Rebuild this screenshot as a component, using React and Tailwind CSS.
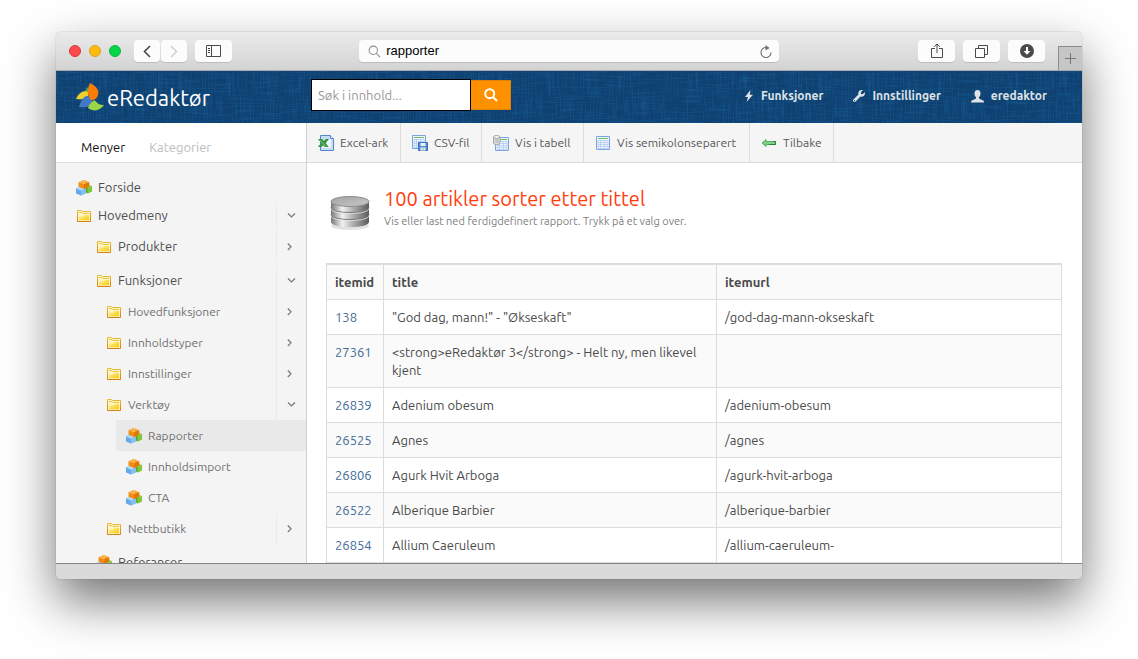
import { useState } from 'react'
import { FaWrench } from 'react-icons/fa'

const MENU = [
  { label: 'Forside', icon: 'cubes' },
  {
    label: 'Hovedmeny',
    open: true,
    children: [
      { label: 'Produkter', children: [] },
      {
        label: 'Funksjoner',
        open: true,
        children: [
          { label: 'Hovedfunksjoner', children: [] },
          { label: 'Innholdstyper', children: [] },
          { label: 'Innstillinger', children: [] },
          {
            label: 'Verktøy',
            open: true,
            children: [
              { label: 'Rapporter', icon: 'cubes', active: true },
              { label: 'Innholdsimport', icon: 'cubes' },
              { label: 'CTA', icon: 'cubes' },
            ],
          },
          { label: 'Nettbutikk', children: [] },
        ],
      },
      { label: 'Referanser', icon: 'cubes' },
    ],
  },
]

const ROWS = [
  { id: '138', title: '"God dag, mann!" - "Økseskaft"', url: '/god-dag-mann-okseskaft' },
  { id: '27361', title: '<strong>eRedaktør 3</strong> - Helt ny, men likevel kjent', url: '' },
  { id: '26839', title: 'Adenium obesum', url: '/adenium-obesum' },
  { id: '26525', title: 'Agnes', url: '/agnes' },
  { id: '26806', title: 'Agurk Hvit Arboga', url: '/agurk-hvit-arboga' },
  { id: '26522', title: 'Alberique Barbier', url: '/alberique-barbier' },
  { id: '26854', title: 'Allium Caeruleum', url: '/allium-caeruleum-' },
]

const LEVELS = [
  { pad: 'pl-5', row: 'h-7', text: 'text-[13px] text-[#4f4f4f]', list: 'pt-[11px]' },
  { pad: 'pl-10', row: 'h-[31px]', text: 'text-[13px] text-[#4f4f4f]', list: 'flex flex-col gap-[3px] pt-px' },
  { pad: 'pl-[50px]', row: 'h-[31px]', text: 'text-xs text-[#707070]', list: '' },
  { pad: 'pl-[10px] ml-[60px]', row: 'h-[31px]', text: 'text-xs text-[#707070]', list: '' },
]

/* Icons */

const Cubes = () => (
  <svg width="16" height="16" viewBox="0 0 16 16" className="shrink-0">
    <path d="M9 6.500l4-1.500 3 1.300v5L11.500 13.500 9 12z" fill="#58a826" />
    <path d="M9 6.500l4-1.500 3 1.300-4.500 2z" fill="#a4dd66" />
    <path d="M11.500 8.300L16 6.300v5l-4.500 2.200z" fill="#7cc93c" />
    <path d="M0 8.300L5 6.300l5 2.200v4.700L5 15.600 0 13.500z" fill="#64a9e8" />
    <path d="M0 8.300L5 6.300l5 2.200-5 2.200z" fill="#b4dafb" />
    <path d="M5 10.700l5-2.200v4.700L5 15.600z" fill="#86bff3" />
    <path d="M2.500 2.200L8 0l5.200 2.200v4.500L8 9 2.500 6.700z" fill="#f08d16" />
    <path d="M2.500 2.200L8 0l5.200 2.200L8 4.300z" fill="#ffbe5c" />
    <path d="M8 4.300l5.200-2.100v4.500L8 9z" fill="#e07808" />
    <path d="M5 2l1.500-.6 1.200.5-1.500.7zM8.500 2.300l1.500-.6 1.200.5-1.500.7z" fill="#e67f0c" />
  </svg>
)

const Folder = () => (
  <svg width="16" height="16" viewBox="0 0 16 16" className="shrink-0">
    <defs>
      <linearGradient id="folderFill" x1="0" y1="0" x2="1" y2="1">
        <stop offset="0" stopColor="#fff3a0" />
        <stop offset="1" stopColor="#f4c905" />
      </linearGradient>
      <linearGradient id="folderEdge" x1="0" y1="0" x2="0" y2="1">
        <stop offset="0" stopColor="#e6bd36" />
        <stop offset="1" stopColor="#d97f18" />
      </linearGradient>
    </defs>
    <path d="M1.500 13.500v-11h4l1 1h8v10z" fill="#fff5c2" stroke="url(#folderEdge)" />
    <path d="M3 12.300V8.500h4l1.500-1.500H13v5.300z" fill="url(#folderFill)" />
    <path d="M3 4.500h3M6.500 5.500H13" stroke="#eac34a" />
  </svg>
)

const Grid = ({ x = 0, y = 0 }) => (
  <g transform={`translate(${x} ${y})`}>
    <path d="M.5.5h13v13H.5z" fill="#eef5ff" stroke="#7fa3dc" />
    <path d="M2 2.500h10" stroke="#6cc35f" />
    <path d="M2 4.500h10v8H2zM2 6.500h10M2 8.500h10M2 10.500h10M4.500 4.500v8M8.500 4.500v8" fill="none" stroke="#b3cbf0" strokeWidth=".8" />
  </g>
)

const TOOL_ICONS = {
  excel: (
    <>
      <path d="M2.500.5h10l3 3v12h-13z" fill="#c7dcf8" stroke="#5585cf" />
      <path d="M12.500.5v3h3" fill="#fff" stroke="#5585cf" />
      <path d="M4 13h9V4h-2z" fill="#eff6ff" />
      <path d="M0 4h4l1.800 2L8 4h3L7.700 8l3 4H6.500L5 10.300 3.200 12H0l3-4z" fill="#34943b" />
      <path d="M1.500 4.800L8 11.500" stroke="#8bd17d" />
    </>
  ),
  csv: (
    <>
      <Grid />
      <path d="M6.500 7.500h9v8h-9z" fill="#5487d6" stroke="#3f6fc0" />
      <path d="M8.500 8h5v3h-5z" fill="#e9f2ff" />
      <path d="M8.500 12.500h5v3h-5z" fill="#fff" />
      <path d="M9.500 14h3" stroke="#63bf48" strokeWidth="1.200" />
    </>
  ),
  table: (
    <>
      <Grid x={2} y={2} />
      <path d="M.5 2v6c0 1 1 1.500 3 1.500S7 9 7 8V2" fill="#dedede" stroke="#a5a5a5" />
      <ellipse cx="3.700" cy="2" rx="3.200" ry="1.500" fill="#f4f4f4" stroke="#a5a5a5" />
      <path d="M3 4v4M4.800 4v4" stroke="#b2b2b2" />
    </>
  ),
  list: <Grid x={1} y={1} />,
  back: (
    <>
      <path d="M1 8l4-3.500v2h9.500v3H5v2z" fill="#7ed084" stroke="#3fa052" strokeWidth=".8" />
      <path d="M12 6.500h2.500v3H8" fill="none" stroke="#1f7d38" strokeWidth=".9" />
    </>
  ),
}

const TOOLS = [
  { label: 'Excel-ark', icon: 'excel', width: 'w-[94px]' },
  { label: 'CSV-fil', icon: 'csv', width: 'w-[81px]' },
  { label: 'Vis i tabell', icon: 'table', width: 'w-[102px]' },
  { label: 'Vis semikolonseparert', icon: 'list', width: 'w-[166px]' },
  { label: 'Tilbake', icon: 'back', width: 'w-[84px]' },
]

const Chevron = ({ open }) => (
  <svg width="10" height="10" viewBox="0 0 10 10" fill="none" stroke="#777" strokeWidth="1.200">
    {open ? <path d="M1 2.500L4.500 6 8 2.500" /> : <path d="M.8 1.500L4 4.800.8 8" />}
  </svg>
)

const Magnifier = ({ size, className, width }) => (
  <svg width={size} height={size} viewBox="0 0 14 14" fill="none" stroke="currentColor" strokeWidth={width} className={className}>
    <circle cx="5.700" cy="5.700" r="4.500" />
    <path d="M9 9l4 4" />
  </svg>
)

const Logo = () => (
  <svg width="29" height="28" viewBox="0 0 29 28" className="shrink-0">
    <path d="M8 10l3-6c2 2 3 5 2 8z" fill="#5b9f45" />
    <path d="M0 16C3 9 8 7 12.500 9c1 5-4 8.500-12.500 7z" fill="#ecd02f" />
    <path d="M3 24c2-7 5-11 8-11 3 0 5 3 7 7-3 4-9 5-15 4z" fill="#4478c4" />
    <path d="M14 0c6 3 9.500 7 8 12-1 4-4 5.500-7 5-4-5-4-11-1-17z" fill="#f97c05" />
    <path d="M12 25c1-4 4-6 6.500-8 2 3 5 5 9.500 5-4 6-11 7-16 3z" fill="#9ad746" />
  </svg>
)

const Database = () => (
  <svg width="42" height="38" viewBox="0 0 42 38" className="shrink-0">
    <defs>
      <linearGradient id="metal">
        <stop offset="0" stopColor="#777" />
        <stop offset=".3" stopColor="#f2f2f2" />
        <stop offset=".55" stopColor="#b5b5b5" />
        <stop offset="1" stopColor="#5a5a5a" />
      </linearGradient>
      <linearGradient id="lid" x1="0" y1="0" x2="1" y2="1">
        <stop offset="0" stopColor="#a2a2a2" />
        <stop offset="1" stopColor="#c9c9c9" />
      </linearGradient>
    </defs>
    <ellipse cx="21" cy="31" rx="19" ry="4" fill="#e2e2e2" />
    <path d="M2 7v20c0 3 8 5 19 5s19-2 19-5V7z" fill="url(#metal)" />
    <path d="M2 12.500c0 3 8 5 19 5s19-2 19-5M2 19.500c0 3 8 5 19 5s19-2 19-5" fill="none" stroke="#777" />
    <path d="M2 13.500c0 3 8 5 19 5s19-2 19-5M2 20.500c0 3 8 5 19 5s19-2 19-5" fill="none" stroke="#e6e6e6" strokeWidth=".8" />
    <ellipse cx="21" cy="6.500" rx="19" ry="5" fill="url(#lid)" stroke="#8d8d8d" />
  </svg>
)

const BoltIcon = () => (
  <svg width="10" height="12" viewBox="0 0 10 12" fill="currentColor">
    <path d="M6.500 0L1 7h3L2.500 12 9 4.800H5.800z" />
  </svg>
)

const UserIcon = () => (
  <svg width="13" height="13" viewBox="0 0 13 13" fill="currentColor">
    <path d="M6.500 0C8.500 0 9.600 1.200 9.500 3.500 9.400 5.300 8.900 6.500 8 7.300v1.300l4 1.900c.7.400 1 1 1 2H0c0-1 .3-1.600 1-2l4-1.900V7.300C4.100 6.500 3.600 5.300 3.500 3.500 3.400 1.200 4.500 0 6.500 0z" />
  </svg>
)

const Linen = () => (
  <svg className="absolute inset-0 size-full" aria-hidden="true">
    <filter id="weft" x="0" y="0" width="100%" height="100%" colorInterpolationFilters="sRGB">
      <feTurbulence type="fractalNoise" baseFrequency="0.04 0.8" numOctaves="2" seed="3" />
      <feColorMatrix values="0 0 0 0 .12  0 0 0 0 .42  0 0 0 0 .65  2.500 0 0 0 -1.100" />
    </filter>
    <filter id="warp" x="0" y="0" width="100%" height="100%" colorInterpolationFilters="sRGB">
      <feTurbulence type="fractalNoise" baseFrequency="0.8 0.04" numOctaves="2" seed="8" />
      <feColorMatrix values="0 0 0 0 .12  0 0 0 0 .42  0 0 0 0 .65  2.500 0 0 0 -1.100" />
    </filter>
    <rect width="100%" height="100%" filter="url(#weft)" opacity=".35" />
    <rect width="100%" height="100%" filter="url(#warp)" opacity=".4" />
  </svg>
)

/* Browser frame */

const ChromeButton = ({ label, className = 'w-[37px]', children }) => (
  <button
    aria-label={label}
    className={`h-[22px] flex items-center justify-center rounded bg-[#fcfcfc] text-[#4a4a4a] shadow-[0_1px_0_#bdbdbd] ${className}`}
  >
    {children}
  </button>
)

function BrowserBar() {
  const [address, setAddress] = useState('rapporter')

  return (
    <div className="h-[39px] shrink-0 relative flex items-center pl-[13px] pr-[37px] bg-linear-to-b from-[#ebebeb] to-[#d3d3d3] border-b border-[#a9a9a9]">
      <div className="flex-12 flex items-center">
        <div className="flex gap-2">
          <span className="size-3 rounded-full bg-[#fc4a4c] border border-[#df3438]" />
          <span className="size-3 rounded-full bg-[#fdbc0c] border border-[#dfa023]" />
          <span className="size-3 rounded-full bg-[#05d546] border border-[#12b33a]" />
        </div>
        <div className="flex gap-px ml-[13px]">
          <ChromeButton label="Tilbake" className="w-[26px]">
            <svg width="8" height="13" viewBox="0 0 8 13" fill="none" stroke="currentColor" strokeWidth="1.600">
              <path d="M7 1L1.500 6.500 7 12" />
            </svg>
          </ChromeButton>
          <ChromeButton label="Frem" className="w-[26px]">
            <svg width="8" height="13" viewBox="0 0 8 13" fill="none" stroke="#d0d0d0" strokeWidth="1.500">
              <path d="M1 1l5.500 5.500L1 12" />
            </svg>
          </ChromeButton>
        </div>
        <ChromeButton label="Sidefelt" className="w-[37px] ml-2">
          <svg width="15" height="12" viewBox="0 0 15 12" fill="none" stroke="currentColor">
            <path d="M.5.5h14v11H.5zM5.500.5v11M2 3.500h2M2 5.500h2M2 7.500h2" />
          </svg>
        </ChromeButton>
      </div>

      <label className="w-[43%] h-[22px] flex items-center gap-[5px] pl-[9px] pr-[7px] rounded bg-[#fcfcfc] shadow-[0_1px_0_#bdbdbd]">
        <Magnifier size={13} width={1.1} className="text-[#8c8c8c]" />
        <input
          aria-label="Adresse"
          value={address}
          onChange={e => setAddress(e.target.value)}
          className="flex-1 min-w-0 font-['Liberation_Sans',sans-serif] text-[13px] text-black outline-none"
        />
        <svg width="12" height="13" viewBox="0 0 12 13" fill="none" stroke="#6f6f6f" strokeWidth="1.100">
          <path d="M8.500 3.200A5 5 0 1 0 11 7.500" />
          <path d="M5.500 0L9.500 3 5.500 5.500z" fill="#6f6f6f" stroke="none" />
        </svg>
      </label>

      <div className="flex-11 flex justify-end gap-2">
        <ChromeButton label="Del">
          <svg width="12" height="16" viewBox="0 0 12 16" fill="none" stroke="currentColor">
            <path d="M4 5.500H.5v9h11v-9H8M6 10V1M3.200 3.700L6 1l2.800 2.700" />
          </svg>
        </ChromeButton>
        <ChromeButton label="Faner">
          <svg width="13" height="13" viewBox="0 0 13 13" fill="none" stroke="currentColor">
            <path d="M.5 3.500h9v9h-9zM3.500 3.500v-3h9v9h-3" />
          </svg>
        </ChromeButton>
        <ChromeButton label="Nedlastinger">
          <svg width="14" height="14" viewBox="0 0 14 14">
            <circle cx="7" cy="7" r="7" fill="currentColor" />
            <path d="M6 3h2v4h2.500L7 10.800 3.500 7H6z" fill="#fff" />
          </svg>
        </ChromeButton>
      </div>

      <button
        aria-label="Ny fane"
        className="absolute right-0 bottom-0 w-6 h-6 flex items-center justify-center bg-[#c6c6c6] border-l border-t border-[#8c8c8c]"
      >
        <svg width="11" height="11" viewBox="0 0 11 11" stroke="#777">
          <path d="M5.500 0v11M0 5.500h11" />
        </svg>
      </button>
    </div>
  )
}

/* eRedaktør */

const NavLink = ({ icon, children }) => (
  <a href="#" className="flex items-center gap-[7px] text-xs font-bold text-[#dfe3e6]">
    {icon}
    {children}
  </a>
)

function Header() {
  const [query, setQuery] = useState('')

  return (
    <header className="h-[52px] shrink-0 relative bg-[#0f4070]">
      <Linen />
      <div className="relative h-full flex items-center pr-[35px]">
        <a href="#" className="w-[255px] flex items-center gap-0.5 pl-5 text-white text-[22px]">
          <Logo />
          eRedaktør
        </a>
        <form className="flex items-center -mt-1" onSubmit={e => e.preventDefault()}>
          <input
            aria-label="Søk i innhold"
            placeholder="Søk i innhold..."
            value={query}
            onChange={e => setQuery(e.target.value)}
            className="w-[160px] h-8 px-1.5 bg-white border border-black text-[13px] text-[#444] placeholder:text-[#999] outline-none"
          />
          <button
            aria-label="Søk"
            className="w-10 h-[30px] flex items-center justify-center bg-[#ff9000] border border-l-0 border-[#dc8208] text-white"
          >
            <Magnifier size={14} width={2} />
          </button>
        </form>
        <nav className="ml-auto flex gap-[30px] -mt-0.5">
          <NavLink icon={<BoltIcon />}>Funksjoner</NavLink>
          <NavLink icon={<FaWrench size={12} />}>Innstillinger</NavLink>
          <NavLink icon={<UserIcon />}>eredaktor</NavLink>
        </nav>
      </div>
    </header>
  )
}

function MenuList({ items, level = 0 }) {
  const style = LEVELS[level]

  return (
    <ul className={style.list}>
      {items.map(item => (
        <li key={item.label}>
          <div className={`flex items-stretch ${style.row} ${style.pad} ${item.active ? 'bg-[#e9e9e9]' : ''}`}>
            <a href="#" className={`flex-1 flex items-center gap-1.5 ${style.text}`}>
              {item.icon === 'cubes' ? <Cubes /> : <Folder />}
              {item.label}
            </a>
            {item.children && (
              <button
                aria-label={item.open ? `Lukk ${item.label}` : `Åpne ${item.label}`}
                className="w-[30px] flex items-center justify-center border-l border-[#ebebeb]"
              >
                <Chevron open={item.open} />
              </button>
            )}
          </div>
          {item.children?.length > 0 && <MenuList items={item.children} level={level + 1} />}
        </li>
      ))}
    </ul>
  )
}

function Sidebar() {
  return (
    <aside className="w-[251px] shrink-0 overflow-hidden bg-[#f4f4f4] border-r border-[#d0d0d0]">
      <div className="h-10 flex items-end gap-6 pl-[25px] pb-[5px] bg-white border-b border-[#dcdcdc] text-[13px]">
        <button className="text-[#111]">Menyer</button>
        <button className="text-[#bdbdbd]">Kategorier</button>
      </div>
      <MenuList items={MENU} />
    </aside>
  )
}

function Toolbar() {
  return (
    <div className="h-10 flex bg-[#f5f5f5] border-b border-[#dcdcdc]">
      {TOOLS.map(tool => (
        <button
          key={tool.label}
          className={`${tool.width} shrink-0 flex items-center gap-1.5 pl-[11px] whitespace-nowrap border-r border-[#dcdcdc] text-xs text-[#555]`}
        >
          <svg width="16" height="16" viewBox="0 0 16 16" className="shrink-0">
            {TOOL_ICONS[tool.icon]}
          </svg>
          {tool.label}
        </button>
      ))}
    </div>
  )
}

function Report() {
  const cell = 'p-2 border border-[#dcdcdc] align-top'

  return (
    <div className="pl-[19px] pr-5 pt-6">
      <div className="h-[76px] flex items-start gap-[13px] pl-[3px]">
        <div className="pt-2">
          <Database />
        </div>
        <div>
          <h1 className="text-xl leading-6 text-[#ff3d0c]">100 artikler sorter etter tittel</h1>
          <p className="text-[11px] leading-5 text-[#808080]">
            Vis eller last ned ferdigdefinert rapport. Trykk på et valg over.
          </p>
        </div>
      </div>

      <table className="w-full table-fixed border-collapse border border-t-2 border-[#dcdcdc] text-[13px] leading-[18px] text-[#4a4a4a]">
        <colgroup>
          <col className="w-[57px]" />
          <col className="w-[333px]" />
          <col />
        </colgroup>
        <thead>
          <tr className="bg-[#fafafa] text-left">
            <th className="p-2 border-r border-[#dcdcdc]">itemid</th>
            <th className="p-2 border-r border-[#dcdcdc]">title</th>
            <th className="p-2">itemurl</th>
          </tr>
        </thead>
        <tbody>
          {ROWS.map(row => (
            <tr key={row.id} className="even:bg-[#fafafa]">
              <td className={cell}>
                <a href="#" className="text-[#426b98]">{row.id}</a>
              </td>
              <td className={cell}>{row.title}</td>
              <td className={cell}>{row.url}</td>
            </tr>
          ))}
        </tbody>
      </table>
    </div>
  )
}

export default function App() {
  return (
    <div className="h-screen overflow-hidden flex flex-col px-14 pt-8 pb-20 bg-white font-['Ubuntu','Noto_Sans',sans-serif]">
      <div className="flex-1 min-h-0 flex flex-col rounded-[5px] overflow-hidden bg-white shadow-[0_0_1px_rgba(0,0,0,0.5),0_22px_50px_rgba(0,0,0,0.55)]">
        <BrowserBar />
        <Header />
        <div className="flex-1 min-h-0 flex overflow-hidden">
          <Sidebar />
          <main className="flex-1 min-w-0 overflow-hidden">
            <Toolbar />
            <Report />
          </main>
        </div>
        <div className="h-4 shrink-0 bg-[#dadada] border-t border-[#858585]" />
      </div>
    </div>
  )
}
